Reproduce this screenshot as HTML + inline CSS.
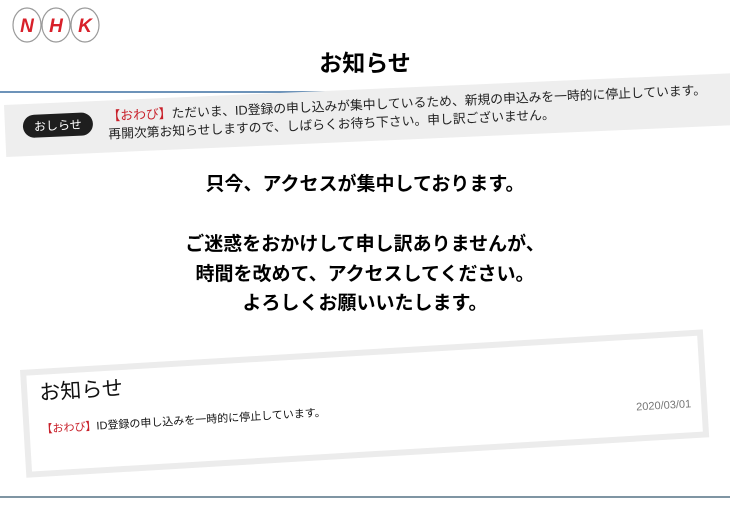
<!DOCTYPE html>
<html><head><meta charset="utf-8"><style>
body{margin:0;width:730px;height:514px;overflow:hidden;background:#fff;font-family:"Liberation Sans","Noto Sans CJK JP",sans-serif;position:relative}
.a{position:absolute}
h1{position:absolute;left:0;width:730px;top:44px;margin:0;text-align:center;font-size:23px;font-weight:bold;color:#000}
.ban{position:absolute;width:740px;height:52px;background:#eee;transform:rotate(-2.5deg);transform-origin:0 0;top:105px;left:4px}
.pill{position:absolute;left:18px;top:11px;background:#1e1e1e;color:#fff;font-size:12px;border-radius:12px;padding:3px 11px}
.bt{position:absolute;left:103px;top:7px;font-size:12.8px;line-height:18px;color:#222;white-space:nowrap}
.r{color:#c8202a}
.main{position:absolute;left:0;width:730px;text-align:center;font-weight:bold;font-size:19px;color:#000}
.box{position:absolute;left:20px;top:370px;width:672px;height:96px;border:6px solid #ececec;background:#fff;transform:rotate(-3.4deg);transform-origin:0 0}
</style></head><body>
<svg class="a" style="left:10px;top:6px" width="94" height="38" viewBox="0 0 94 38">
<g fill="#fff" stroke="#999" stroke-width="1.2">
<ellipse cx="17" cy="19" rx="14" ry="17"/><ellipse cx="46" cy="19" rx="14" ry="17"/><ellipse cx="75" cy="19" rx="14" ry="17"/></g>
<g fill="#d8202a" font-family="Liberation Sans" font-weight="bold" font-style="italic" font-size="19" text-anchor="middle">
<text x="17" y="26">N</text><text x="46" y="26">H</text><text x="75" y="26">K</text></g>
</svg>
<h1>お知らせ</h1>
<div class="a" style="left:0;top:91px;width:730px;height:2px;background:#6d93b9"></div>
<div class="ban"><span class="pill">おしらせ</span>
<div class="bt"><span class="r">【おわび】</span>ただいま、ID登録の申し込みが集中しているため、新規の申込みを一時的に停止しています。<br>再開次第お知らせしますので、しばらくお待ち下さい。申し訳ございません。</div></div>
<div class="main" style="top:169px">只今、アクセスが集中しております。</div>
<div class="main" style="top:229px">ご迷惑をおかけして申し訳ありませんが、</div>
<div class="main" style="top:259px">時間を改めて、アクセスしてください。</div>
<div class="main" style="top:288px">よろしくお願いいたします。</div>
<div class="box">
<div class="a" style="left:12px;top:2px;font-size:21px;color:#111">お知らせ</div>
<div class="a" style="left:12px;top:46px;font-size:11px;color:#111;white-space:nowrap"><span class="r">【おわび】</span>ID登録の申し込みを一時的に停止しています。</div>
<div class="a" style="right:10px;top:62px;font-size:11px;color:#777">2020/03/01</div>
</div>
<div class="a" style="left:0;top:496px;width:730px;height:2px;background:#7f95a3"></div>
</body></html>
